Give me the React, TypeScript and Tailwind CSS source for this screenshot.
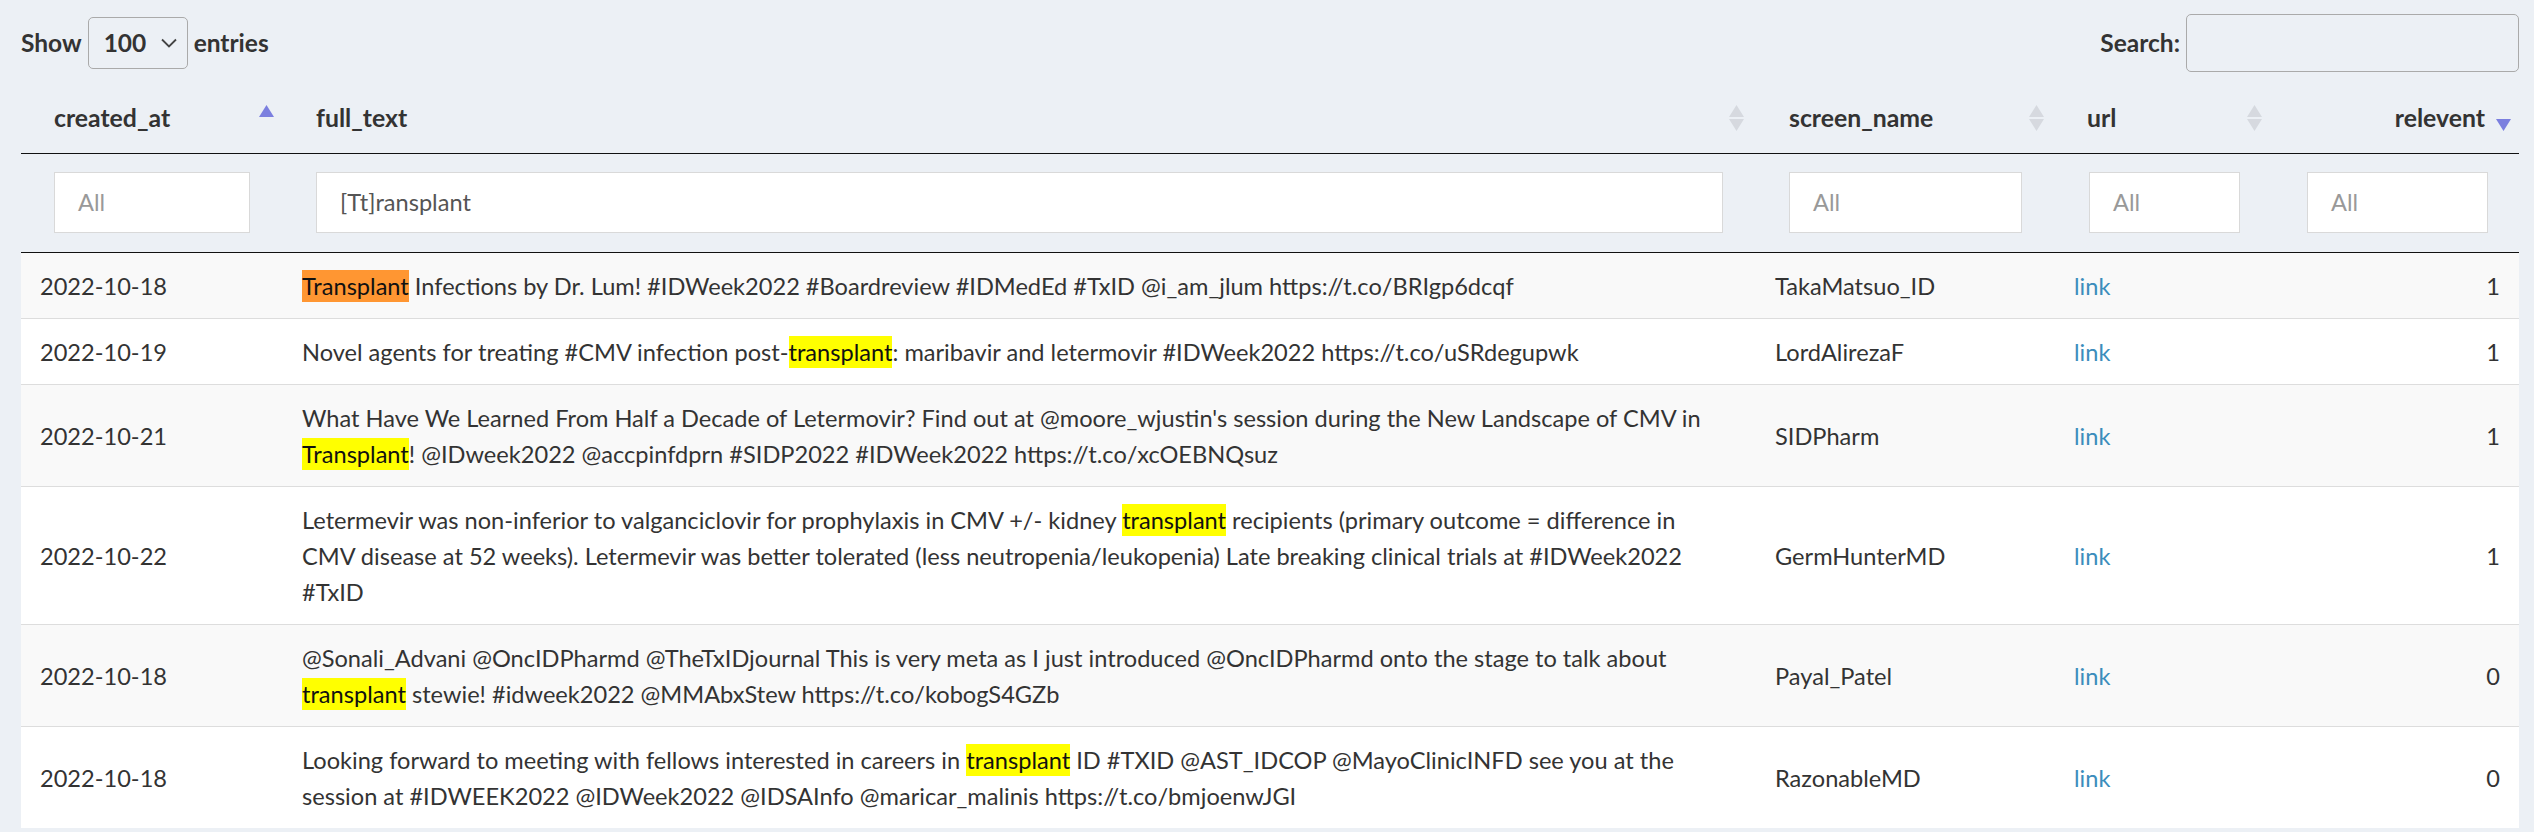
import React from "react"

type Row = {
  created: string
  lines: string[]
  user: string
  relevent: number
}

const rows: Row[] = [
  {
    created: "2022-10-18",
    lines: ["Transplant Infections by Dr. Lum! #IDWeek2022 #Boardreview #IDMedEd #TxID @i_am_jlum https://t.co/BRIgp6dcqf"],
    user: "TakaMatsuo_ID",
    relevent: 1,
  },
  {
    created: "2022-10-19",
    lines: ["Novel agents for treating #CMV infection post-transplant: maribavir and letermovir #IDWeek2022 https://t.co/uSRdegupwk"],
    user: "LordAlirezaF",
    relevent: 1,
  },
  {
    created: "2022-10-21",
    lines: [
      "What Have We Learned From Half a Decade of Letermovir? Find out at @moore_wjustin's session during the New Landscape of CMV in",
      "Transplant! @IDweek2022 @accpinfdprn #SIDP2022 #IDWeek2022 https://t.co/xcOEBNQsuz",
    ],
    user: "SIDPharm",
    relevent: 1,
  },
  {
    created: "2022-10-22",
    lines: [
      "Letermevir was non-inferior to valganciclovir for prophylaxis in CMV +/- kidney transplant recipients (primary outcome = difference in",
      "CMV disease at 52 weeks). Letermevir was better tolerated (less neutropenia/leukopenia) Late breaking clinical trials at #IDWeek2022",
      "#TxID",
    ],
    user: "GermHunterMD",
    relevent: 1,
  },
  {
    created: "2022-10-18",
    lines: [
      "@Sonali_Advani @OncIDPharmd @TheTxIDjournal This is very meta as I just introduced @OncIDPharmd onto the stage to talk about",
      "transplant stewie! #idweek2022 @MMAbxStew https://t.co/kobogS4GZb",
    ],
    user: "Payal_Patel",
    relevent: 0,
  },
  {
    created: "2022-10-18",
    lines: [
      "Looking forward to meeting with fellows interested in careers in transplant ID #TXID @AST_IDCOP @MayoClinicINFD see you at the",
      "session at #IDWEEK2022 @IDWeek2022 @IDSAInfo @maricar_malinis https://t.co/bmjoenwJGI",
    ],
    user: "RazonableMD",
    relevent: 0,
  },
]

function SortIcon({ dir }: { dir?: "asc" | "desc" }) {
  const up = dir === "asc" ? "#7b7fdf" : dir === "desc" ? "transparent" : "#d6d9df"
  const down = dir === "desc" ? "#7b7fdf" : dir === "asc" ? "transparent" : "#d6d9df"
  return (
    <svg width="15" height="26" viewBox="0 0 15 26" className="shrink-0">
      <path d="M7.5 0 L15 12 L0 12 Z" fill={up} />
      <path d="M0 14 L15 14 L7.5 26 Z" fill={down} />
    </svg>
  )
}

function Highlighted({ text, current }: { text: string; current?: boolean }) {
  const parts = text.split(/([Tt]ransplant)/)
  return (
    <>
      {parts.map((p, i) =>
        i % 2 === 1 ? (
          <span key={i} className={`py-[2px] text-[#111] ${current ? "bg-[#ff9632]" : "bg-[#ffff00]"}`}>
            {p}
          </span>
        ) : (
          <React.Fragment key={i}>{p}</React.Fragment>
        )
      )}
    </>
  )
}

export default function App() {
  return (
    <div className="min-h-screen bg-[#ecf0f5] pl-[21px] pr-[15px] pt-[14px] font-[Lato,sans-serif] text-[#333]">
      {/* length + search controls */}
      <div className="flex items-center justify-between h-[58px]">
        <div className="flex items-center gap-[6px] text-[24.5px] font-bold text-[#333]">
          <span>Show</span>
          <div className="flex items-center justify-between w-[100px] h-[52px] border border-[#aaa] rounded-[5px] pl-[15px] pr-[10px] self-start">
            <span>100</span>
            <svg width="16" height="10" viewBox="0 0 16 10">
              <path d="M1 1.5 L8 8.5 L15 1.5" stroke="#444" strokeWidth="1.8" fill="none" />
            </svg>
          </div>
          <span>entries</span>
        </div>
        <div className="flex items-center gap-[6px] text-[24.5px] font-bold">
          <span>Search:</span>
          <div className="w-[333px] h-[58px] border border-[#aaa] rounded-[5px]" />
        </div>
      </div>

      <table className="mt-[11px] w-full table-fixed">
        <colgroup>
          <col className="w-[262px]" />
          <col className="w-[1473px]" />
          <col className="w-[299px]" />
          <col className="w-[219px]" />
          <col className="w-[245px]" />
        </colgroup>
        <thead>
          <tr className="border-b border-[#111] text-[24.8px] font-bold leading-[36px]">
            <th className="pl-[33px] pr-[9px] py-[17px] text-left">
              <div className="flex items-center justify-between">
                <span>created_at</span>
                <SortIcon dir="asc" />
              </div>
            </th>
            <th className="pl-[33px] pr-[12px] py-[17px] text-left">
              <div className="flex items-center justify-between">
                <span>full_text</span>
                <SortIcon />
              </div>
            </th>
            <th className="pl-[33px] pr-[11px] py-[17px] text-left">
              <div className="flex items-center justify-between">
                <span>screen_name</span>
                <SortIcon />
              </div>
            </th>
            <th className="pl-[32px] pr-[12px] py-[17px] text-left">
              <div className="flex items-center justify-between">
                <span>url</span>
                <SortIcon />
              </div>
            </th>
            <th className="pl-[33px] pr-[8px] py-[17px] text-right">
              <div className="flex items-center justify-end gap-[11px]">
                <span>relevent</span>
                <SortIcon dir="desc" />
              </div>
            </th>
          </tr>
          <tr className="border-b border-[#111] text-[23.6px] font-normal">
            {["All", "[Tt]ransplant", "All", "All", "All"].map((v, i) => (
              <td key={i} className={`pt-[18px] pb-[19px] ${i === 3 ? "pl-[34px] pr-[34px]" : i === 4 ? "pl-[33px] pr-[31px]" : "px-[33px]"}`}>
                <div
                  className={`h-[61px] flex items-center bg-white border border-[#d9d9d9] pl-[23px] ${
                    v === "All" ? "text-[#999]" : "text-[#555]"
                  }`}
                >
                  {v}
                </div>
              </td>
            ))}
          </tr>
        </thead>
        <tbody className="text-[23.6px] leading-[36px]">
          {rows.map((r, i) => (
            <tr key={i} className={`${i > 0 ? "border-t border-[#ddd]" : ""} ${i % 2 === 0 ? "bg-[#f9f9f9]" : "bg-white"}`}>
              <td className="px-[19px] pt-[15px] pb-[14px] align-middle">{r.created}</td>
              <td className="px-[19px] pt-[15px] pb-[14px] align-middle">
                {r.lines.map((l, j) => (
                  <React.Fragment key={j}>
                    {j > 0 && <br />}
                    <Highlighted text={l} current={i === 0} />
                  </React.Fragment>
                ))}
              </td>
              <td className="px-[19px] pt-[15px] pb-[14px] align-middle">{r.user}</td>
              <td className="px-[19px] pt-[15px] pb-[14px] align-middle">
                <a className="text-[#3c8dbc]">link</a>
              </td>
              <td className="px-[19px] pt-[15px] pb-[14px] align-middle text-right">{r.relevent}</td>
            </tr>
          ))}
        </tbody>
      </table>
    </div>
  )
}
